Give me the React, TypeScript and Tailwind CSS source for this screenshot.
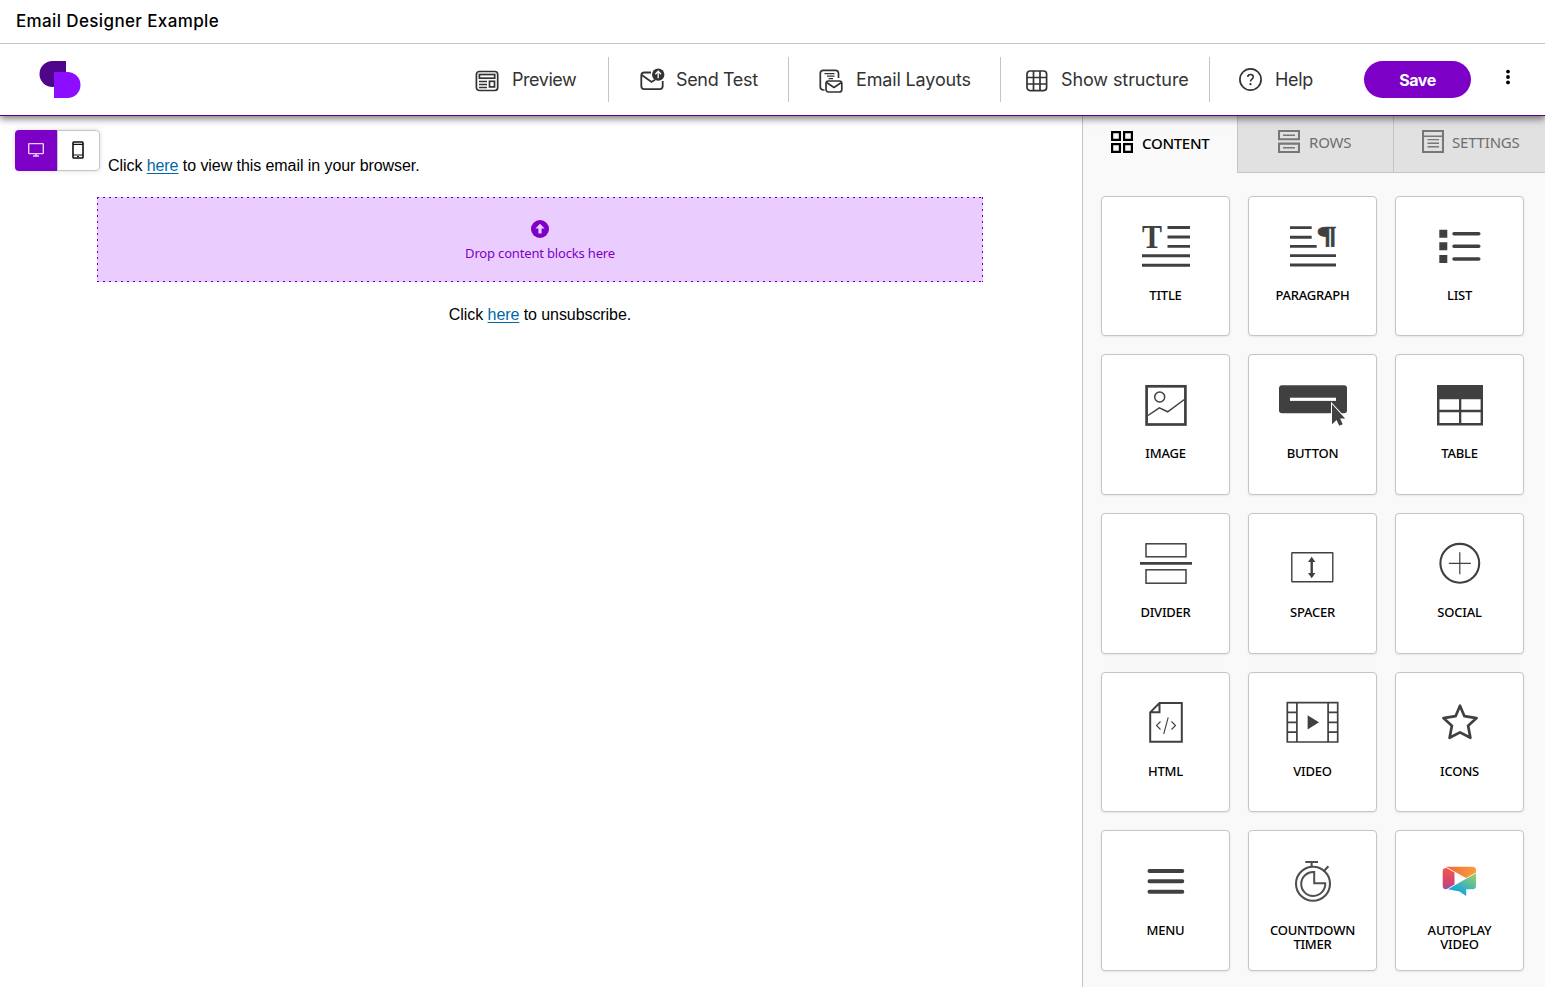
import type { ReactNode } from "react";

type Block = { label: string; icon: ReactNode };

const blocks: Block[] = [
  {
    label: "TITLE",
    icon: (
      <>
        <text x="41" y="52" fontFamily="Liberation Serif, serif" fontWeight="700" fontSize="33" textLength="20" lengthAdjust="spacingAndGlyphs" fill="#404040" stroke="none">
          T
        </text>
        <path d="M66.5 31.5H89M66.5 41H89M66.5 50.4H89M41 59.7H89M41 69.3H89" strokeWidth="2.9" />
      </>
    ),
  },
  {
    label: "PARAGRAPH",
    icon: (
      <>
        <path d="M42 31.6H63.7M42 41.3H63.7M42 50.4H68.7M42 59.6H88M42 69H88" strokeWidth="2.9" />
        <text x="68.3" y="47.5" fontFamily="Liberation Serif, serif" fontWeight="700" fontSize="26" textLength="21" lengthAdjust="spacingAndGlyphs" fill="#404040" stroke="#404040" strokeWidth="0.5">
          ¶
        </text>
      </>
    ),
  },
  {
    label: "LIST",
    icon: (
      <>
        <path d="M44.3 33.7h8v8h-8zM44.3 46.3h8v8h-8zM44.3 59h8v8h-8z" fill="#404040" stroke="none" />
        <path d="M59 37.7H83.8M59 50.3H83.8M59 63H83.8" strokeWidth="3.5" strokeLinecap="round" />
      </>
    ),
  },
  {
    label: "IMAGE",
    icon: (
      <>
        <rect x="45.6" y="32.3" width="38.8" height="38.2" strokeWidth="2.7" />
        <circle cx="58.7" cy="43" r="5" strokeWidth="1.5" />
        <path d="M47 61.5 58.3 53.8 66.7 57.8 84 45" strokeWidth="1.5" />
      </>
    ),
  },
  {
    label: "BUTTON",
    icon: (
      <>
        <rect x="31" y="31.3" width="68" height="28" rx="3" fill="#404040" stroke="none" />
        <rect x="42" y="43.7" width="46" height="3.2" fill="#fff" stroke="none" />
        <path d="M84 50.3v20l4.5-4.3 2.8 5.8 3.4-1.6-2.6-5.7h5z" fill="#404040" stroke="#fff" strokeWidth="2" paintOrder="stroke" />
      </>
    ),
  },
  {
    label: "TABLE",
    icon: (
      <>
        <rect x="42" y="31" width="46" height="40.5" fill="#404040" stroke="none" />
        <path d="M44.5 45.3H64V55.8H44.5zM66.3 45.3H85.6V55.8H66.3zM44.5 58.2H64V69H44.5zM66.3 58.2H85.6V69H66.3z" fill="#fff" stroke="none" />
      </>
    ),
  },
  {
    label: "DIVIDER",
    icon: (
      <>
        <rect x="45" y="30.8" width="40" height="13" strokeWidth="1.5" />
        <rect x="45" y="56.8" width="40" height="13.4" strokeWidth="1.5" />
        <path d="M39 50.4H91" strokeWidth="2.8" />
      </>
    ),
  },
  {
    label: "SPACER",
    icon: (
      <>
        <rect x="43.8" y="39.8" width="41" height="29" rx="0.5" strokeWidth="1.4" />
        <path d="M63.7 47V62" strokeWidth="2.4" />
        <path d="M63.7 43.8 67.4 49H60zM63.7 65.2 67.4 60H60z" fill="#404040" stroke="none" />
      </>
    ),
  },
  {
    label: "SOCIAL",
    icon: (
      <>
        <circle cx="64.8" cy="50.3" r="19.4" strokeWidth="2.1" />
        <path d="M53.8 50.3H75.8M64.8 39.3V61.3" strokeWidth="1.2" />
      </>
    ),
  },
  {
    label: "HTML",
    icon: (
      <>
        <path d="M58.5 31H80.8V69.8H49.2V40.3zM58.5 31V40.3H49.2" strokeWidth="2" />
        <path d="M59.5 49.5 55.5 53.5 59.5 57.5M70.5 49.5 74.5 53.5 70.5 57.5M67.2 45.3 62.7 62" strokeWidth="1.1" />
      </>
    ),
  },
  {
    label: "VIDEO",
    icon: (
      <>
        <path d="M39.3 30.7H89.7V70H39.3zM48.9 30.7V70M80.1 30.7V70M39.3 40.4H48.9M39.3 50.3H48.9M39.3 60.2H48.9M80.1 40.4H89.7M80.1 50.3H89.7M80.1 60.2H89.7" strokeWidth="1.7" />
        <path d="M59.6 43.3V57.4L71 50.3z" fill="#404040" stroke="none" />
      </>
    ),
  },
  {
    label: "ICONS",
    icon: (
      <path
        d="M65 33.7 69.4 44.2 81.6 46.1 73.1 53.7 75.4 65.8 65 60.4 54.6 65.8 56.9 53.7 48.4 46.1 60.6 44.2z"
        strokeWidth="2.7"
        strokeLinejoin="round"
      />
    ),
  },
  {
    label: "MENU",
    icon: <path d="M48.5 41H81.3M48.5 51.2H81.3M48.5 61.7H81.3" strokeWidth="4" strokeLinecap="round" />,
  },
  {
    label: "COUNTDOWN TIMER",
    icon: (
      <g stroke="#4d5052">
        <circle cx="65" cy="53.8" r="17" strokeWidth="2.1" />
        <path d="M66.2 42V53.3H77.2A12 12 0 1 1 66.2 42z" strokeWidth="2" />
        <path d="M57.3 32H70M63.6 32V37M75.5 41.5 80.4 36.3" strokeWidth="2.1" />
      </g>
    ),
  },
  {
    label: "AUTOPLAY VIDEO",
    icon: (
      <g stroke="none">
        <defs>
          <linearGradient id="apLeft" x1="0" y1="0" x2="0" y2="1">
            <stop offset="0" stopColor="#ee5a4a" />
            <stop offset="0.6" stopColor="#d9456b" />
            <stop offset="1" stopColor="#9b50a0" />
          </linearGradient>
          <linearGradient id="apTop" x1="0" y1="0" x2="1" y2="0">
            <stop offset="0" stopColor="#f0663a" />
            <stop offset="1" stopColor="#f99f3c" />
          </linearGradient>
          <linearGradient id="apBottom" x1="1" y1="0" x2="0.3" y2="1">
            <stop offset="0" stopColor="#a8d35a" />
            <stop offset="0.4" stopColor="#5cc19a" />
            <stop offset="0.85" stopColor="#1aa5dc" />
          </linearGradient>
        </defs>
        <path d="M51.5 38 59.5 42.5V54.6L51.5 59.3H51Q47.7 59.3 47.7 55.8V41Q47.7 38 51.5 38z" fill="url(#apLeft)" />
        <path d="M51 36.7H77.5Q81 36.7 81 40.3V42.6L71 47.9 52.2 37.4z" fill="url(#apTop)" />
        <path d="M81 43.3V55.8Q81 59.3 77.5 59.3H71.2V66L64.5 61.5 53 59.3 71.5 48.4z" fill="url(#apBottom)" />
      </g>
    ),
  },
];

const BlockCard = ({ label, icon }: Block) => (
  <div className="flex h-[140.7px] flex-col items-center rounded border border-[#c5c5c5] bg-white pt-[19px] shadow-[0_1px_2px_rgba(0,0,0,0.08)]">
    {/* viewBox is offset so icons are drawn in card coordinates */}
    <svg width="81" height="60" viewBox="24 20 81 60" className="shrink-0" fill="none" stroke="#404040">
      {icon}
    </svg>
    <span className="mt-[12.19px] w-[100px] text-center text-[13px] leading-[14px] font-medium tracking-[-0.22px] text-black">
      {label}
    </span>
  </div>
);

const PreviewIcon = () => (
  <svg width="24" height="22" viewBox="0 0 24 22" fill="none" stroke="#333" strokeWidth="1.7">
    <rect x="1.4" y="1.5" width="21.3" height="19" rx="3" />
    <rect x="4.4" y="4.5" width="15.3" height="3.7" />
    <rect x="14.5" y="11.3" width="5" height="5.6" />
    <path d="M4 11.5H12M4 14.5H12M4 17.5H12" strokeWidth="1.5" />
  </svg>
);

const SendIcon = () => (
  <svg width="25" height="24" viewBox="0 0 25 24" fill="none" stroke="#333" strokeWidth="1.8">
    <path d="M11 4.5H4.5Q1.3 4.5 1.3 7.5V18Q1.3 21.2 4.5 21.2H19.5Q22.7 21.2 22.7 18V13" />
    <path d="M1.8 7 11.5 14 15 11.8" />
    <circle cx="18.2" cy="6.6" r="6.2" fill="#333" stroke="none" />
    <path d="M18.2 10.3V3.5M15.4 6.2 18.2 3.3 21 6.2" stroke="#fff" strokeWidth="1.3" />
  </svg>
);

const LayoutsIcon = () => (
  <svg width="24" height="24" viewBox="0 0 24 24" fill="none" stroke="#333" strokeWidth="1.7" strokeLinejoin="round">
    <path d="M5.5 21H4.5Q1.3 21 1.3 18V4.3Q1.3 1.3 4.3 1.3H16.5Q19.5 1.3 19.5 4.3V9" />
    <path d="M5.5 4.6H15.5M8 7.2H15.5M9.5 9.6H14" strokeWidth="1.3" />
    <rect x="7" y="12" width="15.8" height="11" rx="2.5" />
    <path d="M8 13.8 15 18.5 22 13.8" />
  </svg>
);

const GridIcon = () => (
  <svg width="22" height="22" viewBox="0 0 22 22" fill="none" stroke="#333" strokeWidth="1.7">
    <rect x="1" y="1" width="19.6" height="19.6" rx="3" />
    <path d="M7.5 1V20.5M14 1V20.5M1 7.5H20.5M1 14H20.5" />
  </svg>
);

const HelpIcon = () => (
  <svg width="24" height="24" viewBox="0 0 24 24" fill="none" stroke="#333" strokeWidth="1.7">
    <circle cx="11.5" cy="11.5" r="10.6" />
    <path d="M8.8 9Q8.8 6.5 11.5 6.5T14.2 9Q14.2 10.4 12.7 11.3 11.5 12.1 11.5 13.6" strokeWidth="1.6" />
    <circle cx="11.5" cy="16.2" r="1.1" fill="#333" stroke="none" />
  </svg>
);

const navItem = "flex h-[45px] items-center border-r border-[#c5c5c5] text-[18px] text-[#333]";

const Header = () => (
  <header className="relative z-10 flex h-[72px] items-center border-b border-[#56008f] bg-white font-[Inter,sans-serif] shadow-[0_3px_7px_rgba(0,0,0,0.5)]">
    <svg width="42" height="38" viewBox="0 0 42 38" className="ml-[39px]">
      <path d="M13.5 0H27V26H13.5A13 13 0 0 1 13.5 0z" fill="#4f0589" />
      <path d="M15 11H28.5A13 13 0 0 1 28.5 37H15z" fill="#8c0dff" />
    </svg>
    <nav className="ml-[394px] flex items-center">
      <div className={`${navItem} w-[134px]`}>
        <div className="mt-[3px]">
          <PreviewIcon />
        </div>
        <span className="ml-[13px] tracking-[-0.45px]">Preview</span>
      </div>
      <div className={`${navItem} w-[180px] pl-[31px]`}>
        <SendIcon />
        <span className="ml-[11px] tracking-[-0.35px]">Send Test</span>
      </div>
      <div className={`${navItem} w-[212px] pl-[30px]`}>
        <div className="mt-[2px]">
          <LayoutsIcon />
        </div>
        <span className="ml-[13px] tracking-[-0.15px]">Email Layouts</span>
      </div>
      <div className={`${navItem} w-[209px] pl-[25px]`}>
        <div className="mt-[2px]">
          <GridIcon />
        </div>
        <span className="ml-[13px] tracking-[-0.1px]">Show structure</span>
      </div>
      <div className="flex h-[45px] w-[154px] items-center pl-[29px] text-[18px] text-[#333]">
        <HelpIcon />
        <span className="ml-[12px] tracking-[-0.3px]">Help</span>
      </div>
    </nav>
    <button className="h-[37px] w-[107px] rounded-full bg-[#7d00c7] text-[16px] font-bold tracking-[-0.5px] text-white">
      Save
    </button>
    <svg width="6" height="16" viewBox="0 0 6 16" className="mb-[5px] ml-[34px]" fill="#000">
      <circle cx="3" cy="2.6" r="1.9" />
      <circle cx="3" cy="8" r="1.9" />
      <circle cx="3" cy="13.4" r="1.9" />
    </svg>
  </header>
);

const Canvas = () => (
  <main className="w-[1082px] font-[Liberation_Sans,sans-serif] text-[16px] leading-[20px] tracking-[-0.07px] text-black">
    <div className="flex items-start pt-[14px] pl-[15px]">
      <div className="flex h-[41px] w-[85px] rounded shadow-[0_0_5px_rgba(0,0,0,0.15)]">
        <div className="flex w-[42px] items-center justify-center rounded-l bg-[#7d00c7] pb-px">
          <svg width="16" height="14" viewBox="0 0 16 14" fill="none" stroke="#ecccff">
            <rect x="0.7" y="0.6" width="14.6" height="10" rx="0.8" strokeWidth="1.4" />
            <path d="M8 11V13M5 13H11" strokeWidth="1.5" />
          </svg>
        </div>
        <div className="flex flex-1 items-center justify-center rounded-r border border-[#c5c5c5] bg-white pr-px pb-px">
          <svg width="12" height="18" viewBox="0 0 12 18" fill="none" stroke="#111">
            <rect x="1" y="1" width="10" height="16" rx="0.8" strokeWidth="1.6" />
            <path d="M1 3.4H11M1 14H11" strokeWidth="1.2" />
            <path d="M5 15.5H7" />
          </svg>
        </div>
      </div>
      <p className="mt-[26px] ml-[8px]">
        Click <span className="text-[#0068a5] underline underline-offset-2">here</span> to view this email in your browser.
      </p>
    </div>
    <div className="relative mt-[21px] ml-[97px] flex h-[85px] w-[886px] flex-col items-center bg-[#eaccff] pt-[23px]">
      <svg width="886" height="85" className="absolute inset-0" fill="none" stroke="#6a00ab" strokeDasharray="2 4">
        <path d="M0 0.5H886M0 84.5H886M0.5 0V85M885.5 0V85" />
      </svg>
      <svg width="18" height="18" viewBox="0 0 18 18">
        <circle cx="9" cy="9" r="9" fill="#7d00c7" />
        <path d="M9 3.8 13.6 8.6H10.6V13.6H7.4V8.6H4.4z" fill="#eaccff" />
      </svg>
      <span className="mt-[6px] font-['Noto_Sans',sans-serif] text-[13px] leading-[18px] tracking-[-0.17px] text-[#7d00c7]">
        Drop content blocks here
      </span>
    </div>
    <p className="mt-[23px] w-[1080px] text-center">
      Click <span className="text-[#0068a5] underline underline-offset-2">here</span> to unsubscribe.
    </p>
  </main>
);

const Sidebar = () => (
  <aside className="w-[463px] border-l border-[#c5c5c5] bg-[#f9f9f9] font-['Noto_Sans',sans-serif]">
    <div className="flex h-[57px] text-[15px] tracking-[-0.2px]">
      <div className="flex w-[154px] items-center pb-[6px] pl-[28px] font-medium tracking-[-0.3px] text-black">
        <svg width="22" height="22" viewBox="0 0 22 22" fill="none" stroke="#000" strokeWidth="2.2">
          <path d="M1.1 1.1H8.9V8.9H1.1zM13.1 1.1H20.9V8.9H13.1zM1.1 13.1H8.9V20.9H1.1zM13.1 13.1H20.9V20.9H13.1z" />
        </svg>
        <span className="mt-[3px] ml-[9px]">CONTENT</span>
      </div>
      <div className="flex w-[156px] items-center border-b border-l border-[#c5c5c5] bg-[#e1e1e1] pb-[6px] pl-[40px] text-[#6e6e6e]">
        <svg width="22" height="23" viewBox="0 0 22 23" fill="none" stroke="#777" strokeWidth="2.1">
          <path d="M1 1H21V9.3H1zM1 13.6H21V22H1z" />
          <path d="M5 5.2H17M5 17.8H17" strokeWidth="1.4" />
        </svg>
        <span className="mt-[3px] ml-[9px]">ROWS</span>
      </div>
      <div className="flex w-[152px] items-center border-b border-l border-[#c5c5c5] bg-[#e1e1e1] pb-[6px] pl-[28px] text-[#6e6e6e]">
        <svg width="22" height="23" viewBox="0 0 22 23" fill="none" stroke="#777" strokeWidth="2.1">
          <path d="M1 1H21V22H1z" />
          <path d="M1 6.3H21M5.5 9.6H17M5.5 13.2H17M5.5 16.8H17" strokeWidth="1.4" />
        </svg>
        <span className="mt-[3px] ml-[8px]">SETTINGS</span>
      </div>
    </div>
    <div className="mt-[22.6px] ml-[18px] grid w-[423px] grid-cols-3 gap-[18px]">
      {blocks.map((block) => (
        <BlockCard key={block.label} {...block} />
      ))}
    </div>
  </aside>
);

const App = () => (
  <div className="flex h-[987px] w-[1545px] flex-col overflow-hidden bg-white">
    <div className="relative z-20 h-[44px] shrink-0 border-b border-[#c5c5c5] bg-white pl-4 font-[Inter,sans-serif] text-[17px] leading-[42px] font-medium tracking-[0.37px] text-black">
      Email Designer Example
    </div>
    <Header />
    <div className="flex flex-1">
      <Canvas />
      <Sidebar />
    </div>
  </div>
);

export default App;
